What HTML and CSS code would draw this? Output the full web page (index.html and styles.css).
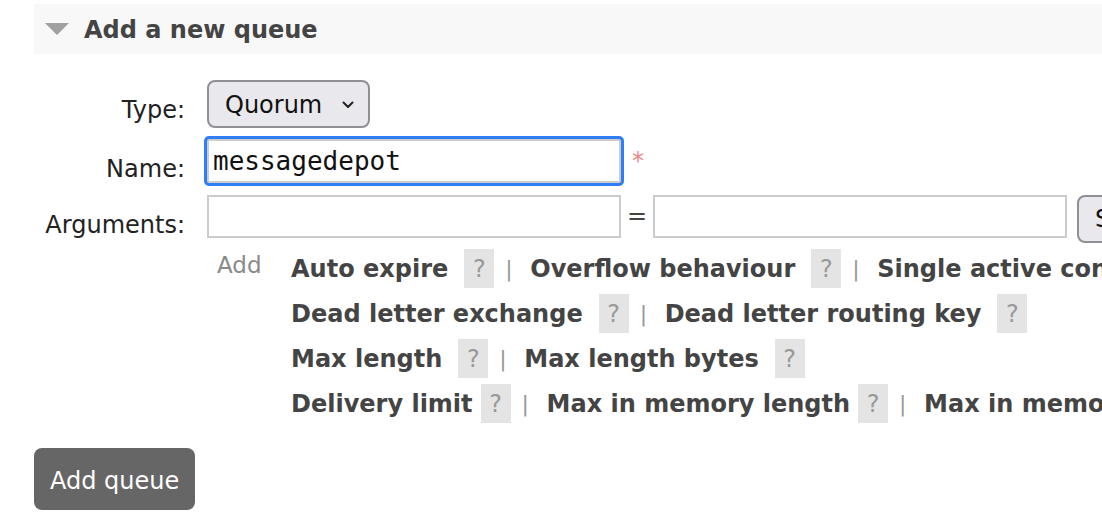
FILE: index.html
```html
<!DOCTYPE html>
<html lang="en">
<head>
<meta charset="utf-8">
<title>Add a new queue</title>
<link rel="stylesheet" href="styles.css">
</head>
<body>
<div class="section-head">
  <span class="tri"></span>
  <h2>Add a new queue</h2>
</div>

<div class="row r1">
  <label class="lbl">Type:</label>
  <div class="field">
    <div class="select type-select">
      <span class="sel-text">Quorum</span>
      <svg class="chev" width="12" height="8" viewBox="0 0 12 8"><path d="M1.5 1.5 L6 6 L10.5 1.5" fill="none" stroke="#222" stroke-width="2" stroke-linecap="round" stroke-linejoin="round"/></svg>
    </div>
  </div>
</div>

<div class="row r2">
  <label class="lbl">Name:</label>
  <div class="field">
    <input class="txt name" type="text" value="messagedepot">
    <span class="req">*</span>
  </div>
</div>

<div class="row r3">
  <label class="lbl">Arguments:</label>
  <div class="field">
    <input class="txt arg" type="text">
    <span class="eq">=</span>
    <input class="txt arg" type="text">
    <div class="select type-small">
      <span class="sel-text">String</span>
      <svg class="chev" width="12" height="8" viewBox="0 0 12 8"><path d="M1.5 1.5 L6 6 L10.5 1.5" fill="none" stroke="#222" stroke-width="2" stroke-linecap="round" stroke-linejoin="round"/></svg>
    </div>
  </div>
</div>

<div class="row r4">
  <span class="lbl"></span>
  <div class="field add-field">
    <span class="add">Add</span>
    <div class="links">
      <div class="line">
        <span class="arg-link">Auto expire</span><span class="help">?</span><span class="sep">|</span><span class="arg-link">Overflow behaviour</span><span class="help">?</span><span class="sep">|</span><span class="arg-link">Single active consumer</span><span class="help">?</span>
      </div>
      <div class="line">
        <span class="arg-link">Dead letter exchange</span><span class="help">?</span><span class="sep">|</span><span class="arg-link">Dead letter routing key</span><span class="help">?</span>
      </div>
      <div class="line">
        <span class="arg-link">Max length</span><span class="help">?</span><span class="sep">|</span><span class="arg-link">Max length bytes</span><span class="help">?</span>
      </div>
      <div class="line">
        <span class="arg-link">Delivery limit</span><span class="help tight">?</span><span class="sep">|</span><span class="arg-link">Max in memory length</span><span class="help tight">?</span><span class="sep">|</span><span class="arg-link">Max in memory bytes</span><span class="help tight">?</span>
      </div>
    </div>
  </div>
</div>

<button class="btn" type="button">Add queue</button>
</body>
</html>
```

FILE: styles.css
```css
html, body {
  margin: 0;
  padding: 0;
  overflow: hidden;
  background: #fff;
}

body {
  width: 1102px;
  height: 532px;
  font-family: "DejaVu Sans", Verdana, sans-serif;
  font-size: 24px;
  color: #222;
}

.section-head {
  display: flex;
  align-items: center;
  height: 50px;
  margin: 4px 0 0 34px;
  width: 1200px;
  background: #f8f8f8;
}

.tri {
  width: 0;
  height: 0;
  border-left: 12px solid transparent;
  border-right: 12px solid transparent;
  border-top: 12px solid #a0a0a0;
  margin-left: 11px;
  margin-right: 15px;
}

.section-head h2 {
  margin: 0;
  font-size: 24px;
  font-weight: bold;
  color: #444;
  line-height: 47px;
  padding-top: 3px;
}

.row {
  display: flex;
  align-items: flex-start;
  white-space: nowrap;
}

.r1 { margin-top: 26px; }
.r2 { margin-top: 11px; }
.r3 { margin-top: 12px; }
.r4 { margin-top: 3px; }

.lbl {
  flex: none;
  width: 185px;
  text-align: right;
  padding-top: 16px;
  line-height: 28px;
  color: #222;
}

.field {
  display: flex;
  align-items: flex-start;
  margin-left: 22px;
}

.select {
  box-sizing: border-box;
  display: flex;
  align-items: center;
  height: 48px;
  border: 2px solid #8f8f95;
  border-radius: 8px;
  background: #e9e9ed;
  color: #111;
  flex: none;
}

.type-select {
  width: 163px;
  padding-left: 16px;
  padding-top: 2px;
}

.type-small {
  width: 120px;
  padding-left: 16px;
  margin-left: 10px;
}

.sel-text {
  line-height: 28px;
}

.chev {
  margin-left: auto;
  margin-right: 14px;
}

.txt {
  box-sizing: border-box;
  width: 414px;
  height: 44px;
  margin: 0;
  padding: 0 4px;
  border: 2px solid #cccccc;
  border-radius: 0;
  background: #fff;
  outline: none;
  font-family: "DejaVu Sans Mono", monospace;
  font-size: 26px;
  color: #111;
  flex: none;
}

.name {
  border-radius: 2px;
  box-shadow: 0 0 0 3px #2f7ef5;
}

.arg {
  height: 43px;
}

.req {
  margin-left: 11px;
  padding-top: 8px;
  line-height: 28px;
  color: #ef8585;
}

.eq {
  width: 32px;
  text-align: center;
  line-height: 43px;
  color: #444;
}

.add-field {
  align-items: flex-start;
}

.add {
  width: 74px;
  margin-left: 10px;
  padding-top: 5px;
  font-size: 23px;
  line-height: 28px;
  color: #8a8a8a;
}

.links {
  display: flex;
  flex-direction: column;
}

.line {
  display: flex;
  align-items: center;
  height: 45px;
  white-space: nowrap;
}

.arg-link {
  font-weight: bold;
  color: #444;
}

.help {
  display: inline-flex;
  align-items: center;
  justify-content: center;
  width: 30px;
  height: 39px;
  margin-left: 16px;
  background: #e4e4e4;
  color: #999;
  font-size: 24px;
}

.help.tight {
  margin-left: 8px;
}

.sep {
  width: 36px;
  padding-left: 11px;
  box-sizing: border-box;
  color: #999;
  font-size: 22px;
}

.btn {
  display: block;
  margin: 22px 0 0 34px;
  height: 62px;
  padding: 3px 16px 0;
  border: none;
  border-radius: 8px;
  background: #666;
  color: #fff;
  font-family: "DejaVu Sans", Verdana, sans-serif;
  font-size: 24px;
}
```
